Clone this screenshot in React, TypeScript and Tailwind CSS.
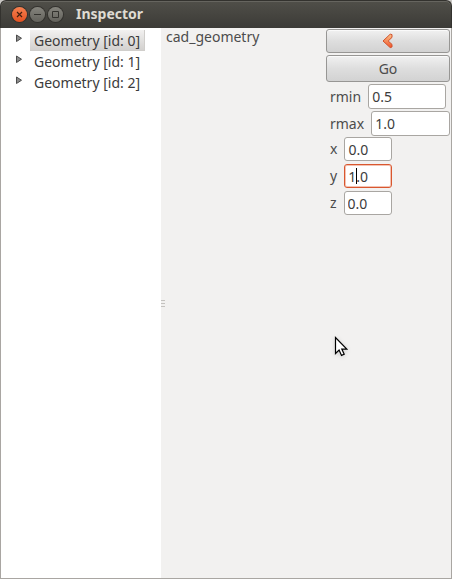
import { useState } from "react";

const items = ["Geometry [id: 0]", "Geometry [id: 1]", "Geometry [id: 2]"];

function TitleBar() {
  return (
    <header className="flex h-7 shrink-0 items-center rounded-t-md border border-b-0 border-[#33322e] bg-linear-to-b from-[#504f49] to-[#3c3b37] pl-[11px] shadow-[inset_0_1px_0_#66655f]">
      <div className="flex gap-[3px]">
        <button aria-label="Close" className="flex size-[15px] items-center justify-center rounded-full bg-linear-to-b from-[#f6804f] to-[#e3501f] shadow-[0_0_0_1px_#33322e]">
          <svg viewBox="0 0 15 15" className="size-[15px]" stroke="#45200f" strokeWidth="1.2">
            <path d="M5 5l5 5M10 5l-5 5" />
          </svg>
        </button>
        <button aria-label="Minimize" className="flex size-[15px] items-center justify-center rounded-full bg-linear-to-b from-[#85847d] to-[#63625c] shadow-[0_0_0_1px_#33322e]">
          <svg viewBox="0 0 15 15" className="size-[15px]" stroke="#33322e">
            <path d="M4 7.5h7" />
          </svg>
        </button>
        <button aria-label="Maximize" className="flex size-[15px] items-center justify-center rounded-full bg-linear-to-b from-[#85847d] to-[#63625c] shadow-[0_0_0_1px_#33322e]">
          <svg viewBox="0 0 15 15" className="size-[15px]" stroke="#33322e" fill="none">
            <path d="M4.5 4.5h6v6h-6z" />
          </svg>
        </button>
      </div>
      <h1 className="ml-[13px] pb-px text-sm font-bold text-[#dfdbd2]">Inspector</h1>
    </header>
  );
}

function Tree() {
  const [selected, setSelected] = useState(0);
  return (
    <ul className="w-40 shrink-0 bg-white pt-[2px] pl-3 text-[#3c3c3c]">
      {items.map((item, i) => (
        <li key={item} className="flex h-[21px] items-start">
          <svg viewBox="0 0 10 10" className="mt-[3px] mr-[7px] size-[10px]" aria-hidden="true">
            <path d="M3.5 2v6.5l5-3.25z" fill="#8c8c8c" stroke="#4c4c4c" />
          </svg>
          <button
            onClick={() => setSelected(i)}
            className={
              selected === i
                ? "h-[21px] border-r border-b border-[#d0cecb] bg-linear-to-b from-[#f2f1f0] to-[#d3d1cf] px-1 leading-[22px] whitespace-nowrap"
                : "h-[21px] border-r border-b border-transparent px-1 leading-[22px] whitespace-nowrap"
            }
          >
            {item}
          </button>
        </li>
      ))}
    </ul>
  );
}

const buttonClass =
  "flex w-full items-center justify-center rounded-[3px] border border-[#979694] bg-linear-to-b from-[#f1f1f1] via-[#dedede] to-[#d2d2d2] shadow-[inset_0_1px_0_#fafafa]";

function Controls() {
  return (
    <form className="w-[124px] shrink-0 pt-px" onSubmit={(e) => e.preventDefault()}>
      <button type="button" aria-label="Back" className={`${buttonClass} h-6`}>
        <svg viewBox="0 0 12 16" className="h-4 w-3" aria-hidden="true">
          <defs>
            <linearGradient id="arrow" x1="0" y1="0" x2="0" y2="1">
              <stop offset="0" stopColor="#fbc48c" />
              <stop offset="1" stopColor="#f0542a" />
            </linearGradient>
          </defs>
          <path d="M8.2 1.2L1 8l7.2 6.6 1.8-.6v-2.6L6.2 8 10 4.4V1.6z" fill="url(#arrow)" stroke="#d1512c" strokeLinejoin="round" />
        </svg>
      </button>
      <button type="submit" className={`${buttonClass} mt-[2px] h-[27px]`}>Go</button>
      <div className="mt-[2px] flex h-[25px] items-center gap-[7px] pl-1">
        <label htmlFor="rmin">rmin</label>
        <input id="rmin" defaultValue="0.5" className="mr-1 h-[25px] min-w-0 flex-1 rounded-[3px] border border-[#a9a6a2] bg-white px-[3px] text-[#3c3c3c] outline-none" />
      </div>
      <div className="mt-[2px] flex h-[25px] items-center gap-[7px] pl-1">
        <label htmlFor="rmax">rmax</label>
        <input id="rmax" defaultValue="1.0" className="h-[25px] min-w-0 flex-1 rounded-[3px] border border-[#a9a6a2] bg-white px-[3px] text-[#3c3c3c] outline-none" />
      </div>
      <div className="mt-px flex flex-col gap-[3px]">
        <div className="flex h-6 items-center gap-[7px] pl-1">
          <label htmlFor="x">x</label>
          <input id="x" defaultValue="0.0" className="h-6 w-12 rounded-[3px] border border-[#a9a6a2] bg-white px-[3px] text-[#3c3c3c] outline-none" />
        </div>
        <div className="flex h-6 items-center gap-[7px] pl-1">
          <label htmlFor="y">y</label>
          <div className="relative h-6 w-12">
            <input id="y" defaultValue="1.0" className="h-6 w-12 rounded-[3px] border border-[#d9572f] bg-white px-[3px] text-[#3c3c3c] shadow-[inset_0_0_0_1px_#f3c3b3] outline-none" />
            <span className="absolute top-1 left-3 h-4 w-px bg-black" />
          </div>
        </div>
        <div className="flex h-6 items-center gap-[7px] pl-1">
          <label htmlFor="z">z</label>
          <input id="z" defaultValue="0.0" className="h-6 w-12 rounded-[3px] border border-[#a9a6a2] bg-white px-[3px] text-[#3c3c3c] outline-none" />
        </div>
      </div>
    </form>
  );
}

export default function App() {
  return (
    <div className="relative flex min-h-screen flex-col bg-[#c9c7c4] font-['Noto_Sans',sans-serif] text-sm text-[#4c4c4c]">
      <TitleBar />
      <main className="flex flex-1 border border-t-0 border-[#a9a6a2] bg-[#f2f1f0]">
        <Tree />
        <div className="flex w-[5px] shrink-0 flex-col items-start justify-center gap-[2px]" role="separator">
          <span className="h-px w-1 bg-[#c4c2bf]" />
          <span className="h-px w-1 bg-[#c4c2bf]" />
          <span className="h-px w-1 bg-[#c4c2bf]" />
        </div>
        <p className="flex-1 leading-[18px]">cad_geometry</p>
        <Controls />
        <div className="w-px" />
      </main>
      <svg viewBox="0 0 14 21" className="absolute top-[336px] left-[334px] h-[21px] w-[14px] drop-shadow-sm" aria-hidden="true">
        <path d="M1.5 1.5v16l3.6-3.4 2.4 5.3 2.7-1.2-2.4-5.1h5z" fill="#fff" stroke="#000" strokeWidth="1.2" />
      </svg>
    </div>
  );
}
